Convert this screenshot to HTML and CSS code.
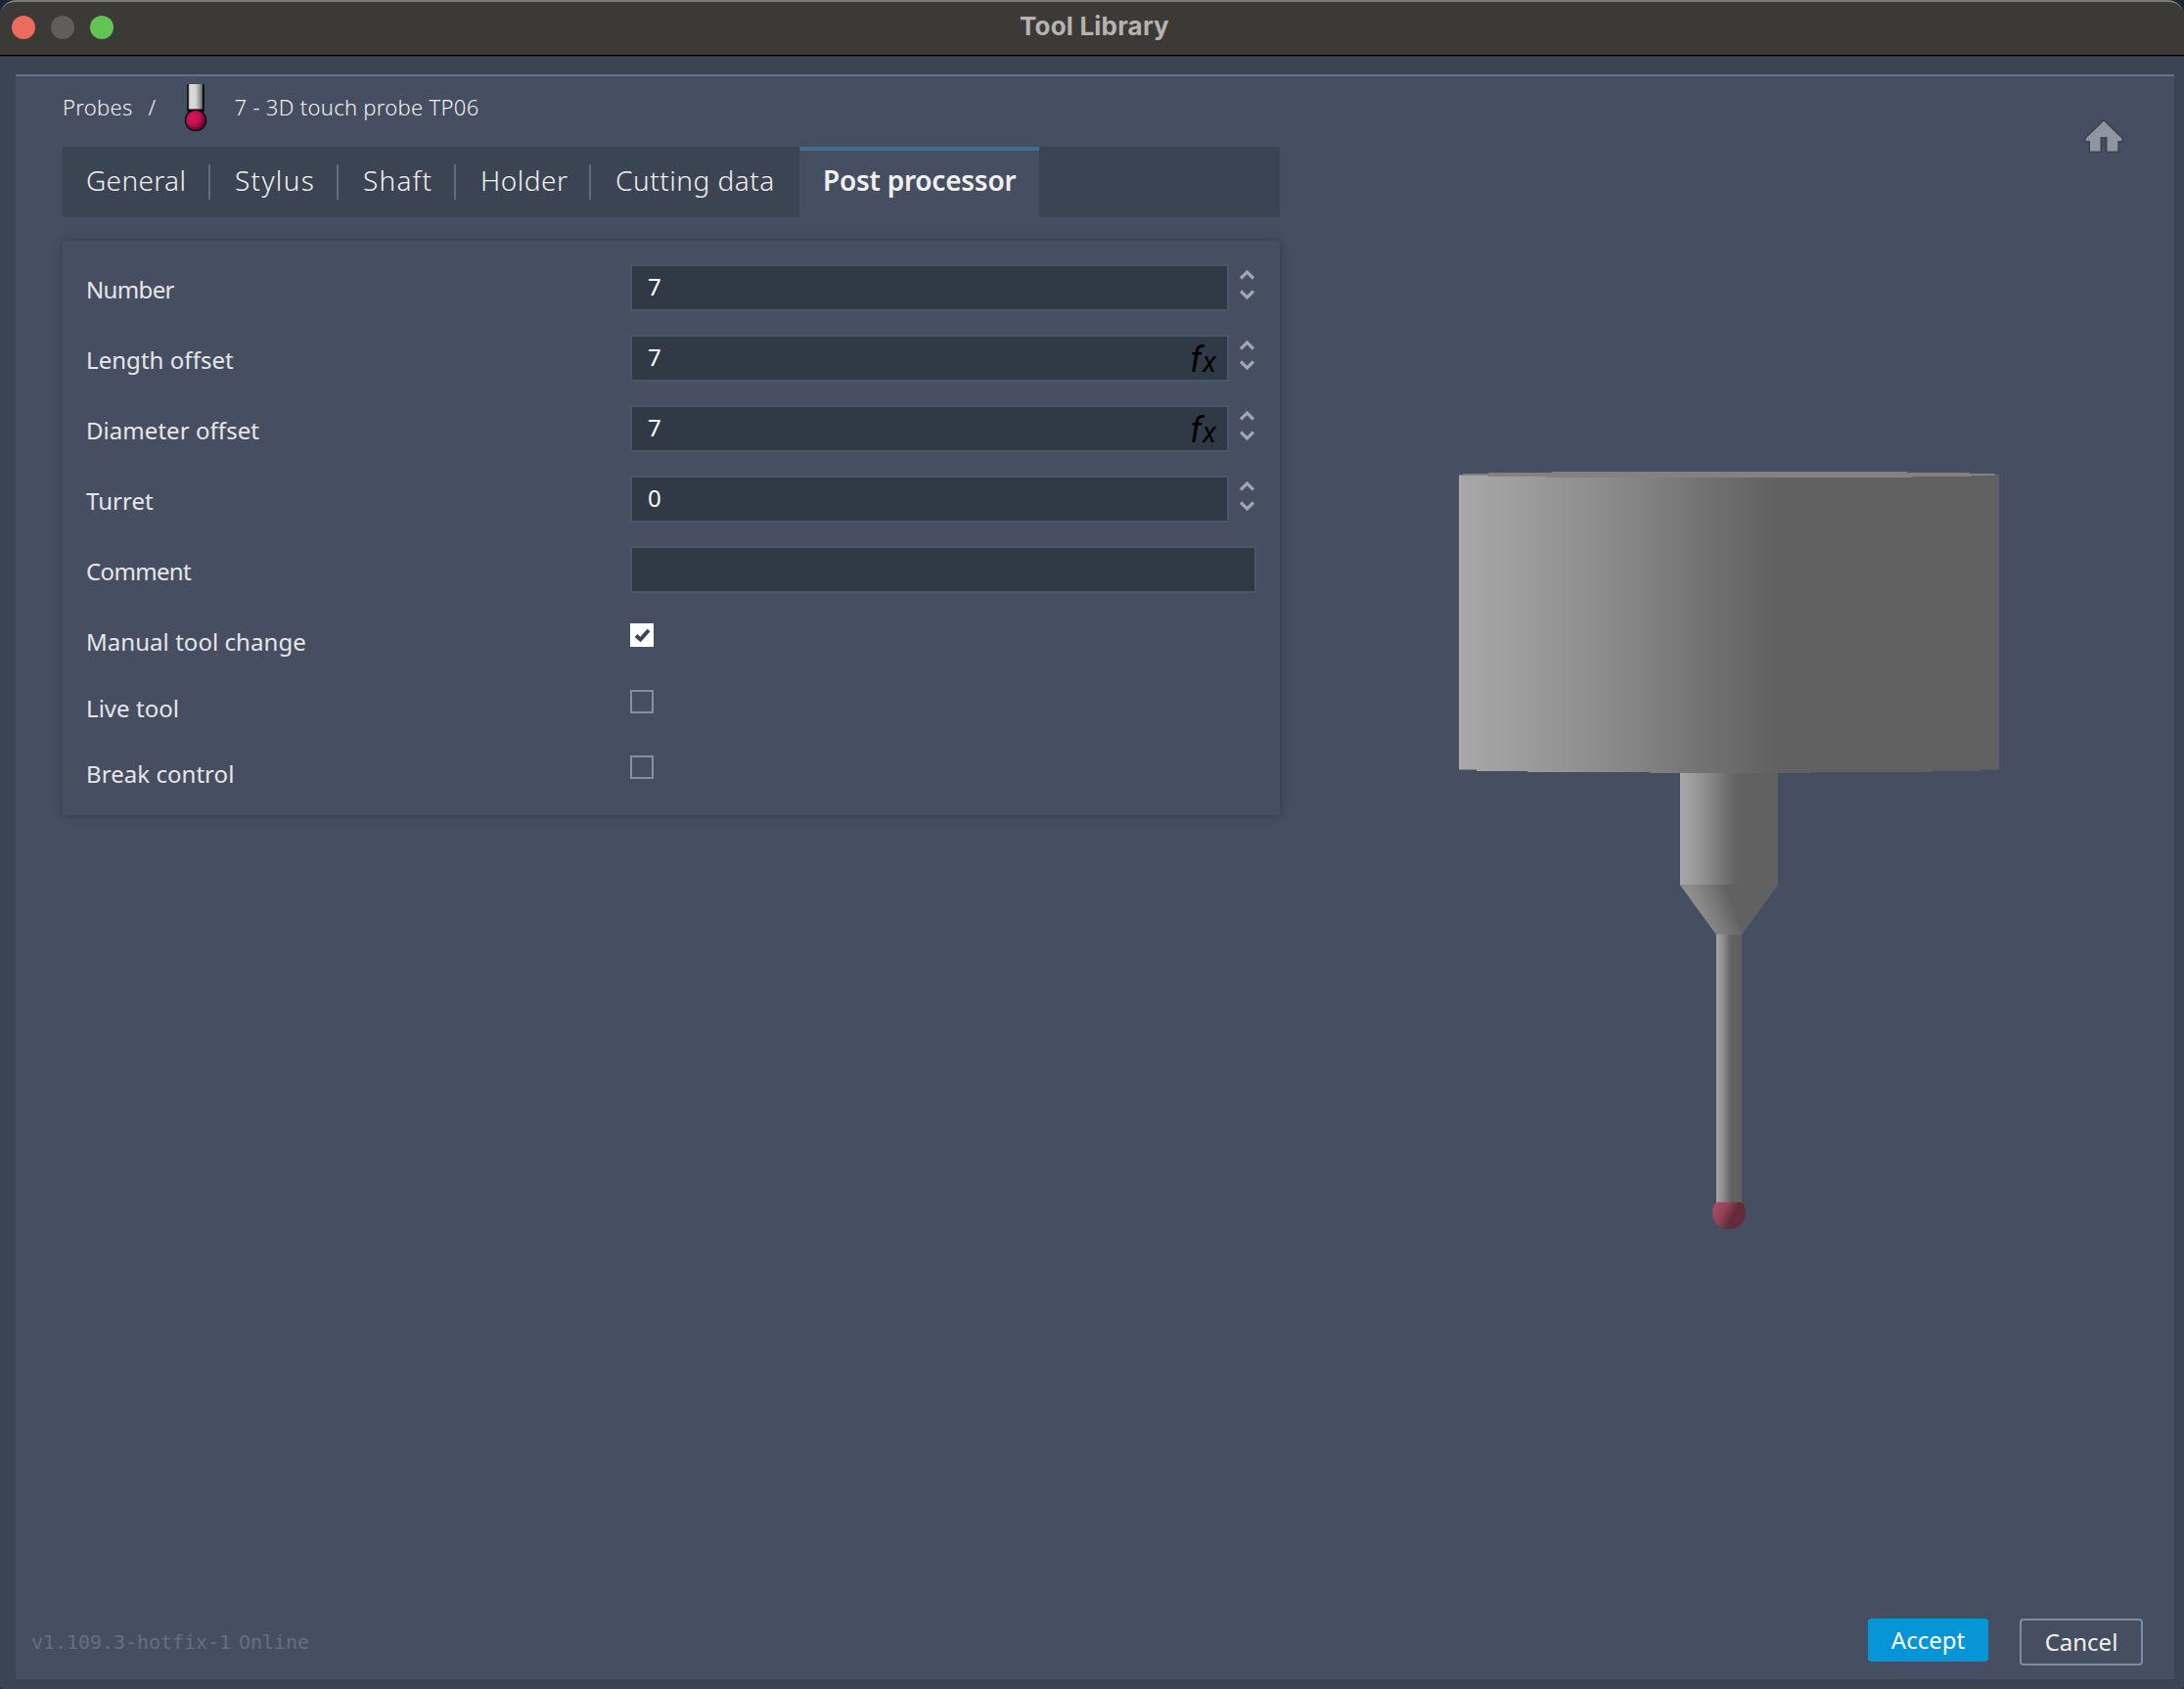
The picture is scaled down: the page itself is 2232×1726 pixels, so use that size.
FILE: index.html
```
<!DOCTYPE html>
<html lang="en">
<head>
<meta charset="utf-8">
<title>Tool Library</title>
<link rel="stylesheet" href="styles.css">
</head>
<body>
<div class="window">
  <header class="titlebar">
    <div class="lights"><span class="light close"></span><span class="light minimize"></span><span class="light zoom"></span></div>
    <h1 class="title">Tool Library</h1>
  </header>
  <main class="panel">
    <div class="content">
      <section class="editor">
        <nav class="breadcrumb">
          <span>Probes</span>
          <span class="slash">/</span>
          <svg class="probe-icon" width="24" height="50" viewBox="0 0 24 50">
            <defs>
              <linearGradient id="metal"><stop offset="0" stop-color="#b9b9b9"/><stop offset=".2" stop-color="#dedede"/><stop offset=".55" stop-color="#cfcfcf"/><stop offset="1" stop-color="#6c6c6c"/></linearGradient>
              <radialGradient id="ruby" cx=".35" cy=".35" r=".75"><stop offset="0" stop-color="#e0125f"/><stop offset=".5" stop-color="#bf0f50"/><stop offset="1" stop-color="#4c0620"/></radialGradient>
            </defs>
            <path d="M3.2 0H20.8V27L19 31H5L3.2 27Z" fill="#0c0c0e"/>
            <rect x="4.8" y="0" width="14" height="25.500" fill="url(#metal)"/>
            <path d="M6 27.500H18" stroke="#555" stroke-width="1"/>
            <circle cx="12" cy="37" r="11.300" fill="#0c0c0e"/>
            <circle cx="12" cy="37" r="9.900" fill="url(#ruby)"/>
          </svg>
          <span class="tool-name">7 - 3D touch probe TP06</span>
        </nav>
        <nav class="tabs">
          <a class="tab general">General</a>
          <a class="tab stylus">Stylus</a>
          <a class="tab shaft">Shaft</a>
          <a class="tab holder">Holder</a>
          <a class="tab cutting">Cutting data</a>
          <a class="tab active">Post processor</a>
        </nav>
        <form class="card">
          <div class="row"><label class="tight">Number</label><div class="input">7</div><svg class="spinner" width="17" height="32" viewBox="0 0 17 32"><path d="M2 9.500 8.500 3 15 9.500M2 22.500 8.500 29 15 22.500"/></svg></div>
          <div class="row"><label>Length offset</label><div class="input">7<span class="fx">f<small>x</small></span></div><svg class="spinner" width="17" height="32" viewBox="0 0 17 32"><path d="M2 9.500 8.500 3 15 9.500M2 22.500 8.500 29 15 22.500"/></svg></div>
          <div class="row"><label>Diameter offset</label><div class="input">7<span class="fx">f<small>x</small></span></div><svg class="spinner" width="17" height="32" viewBox="0 0 17 32"><path d="M2 9.500 8.500 3 15 9.500M2 22.500 8.500 29 15 22.500"/></svg></div>
          <div class="row"><label>Turret</label><div class="input">0</div><svg class="spinner" width="17" height="32" viewBox="0 0 17 32"><path d="M2 9.500 8.500 3 15 9.500M2 22.500 8.500 29 15 22.500"/></svg></div>
          <div class="row"><label class="tight">Comment</label><div class="input"></div></div>
          <div class="row check-row"><label>Manual tool change</label><span class="checkbox checked"><svg width="24" height="24" viewBox="0 0 24 24"><path d="M6 12.500 10.500 16.500 19 7"/></svg></span></div>
          <div class="row check-row"><label>Live tool</label><span class="checkbox"></span></div>
          <div class="row check-row"><label>Break control</label><span class="checkbox"></span></div>
        </form>
      </section>
      <section class="viewport">
        <svg class="home" width="44" height="38" viewBox="0 0 44 38">
          <path d="M22 3.700 40.300 21.500V24H36.300V34.500H25.500V20H18.500V34.500H8V24H3.700V21.500Z"/>
        </svg>
        <svg class="model" width="552" height="774" viewBox="0 0 552 774">
          <defs>
            <linearGradient id="steel"><stop offset="0" stop-color="#a8a8a8"/><stop offset=".1" stop-color="#9e9e9e"/><stop offset=".24" stop-color="#8f8f8f"/><stop offset=".38" stop-color="#7d7d7d"/><stop offset=".46" stop-color="#717171"/><stop offset=".54" stop-color="#676767"/><stop offset=".59" stop-color="#616161"/></linearGradient>
            <linearGradient id="cone" gradientUnits="userSpaceOnUse" x1="246" y1="455" x2="280" y2="442"><stop offset="0" stop-color="#8e8e8e"/><stop offset=".5" stop-color="#7b7b7b"/><stop offset="1" stop-color="#616161"/></linearGradient>
            <linearGradient id="tip" x1="0" y1=".3" x2="1" y2=".7"><stop offset="0" stop-color="#a94a64"/><stop offset=".3" stop-color="#94425a"/><stop offset=".6" stop-color="#632b3b"/></linearGradient>
          </defs>
          <path d="M0 3H552V304.500H533V306H484V307H360V308H195V307H70V306H18V304.500H0Z" fill="url(#steel)"/>
          <path d="M4 3V2H30V1H95V0H458V1H522V2H548V4H524V5H464V6H90V5H30V4H0V3Z" fill="#828282"/>
          <path d="M226 308H326V422L289 473H263L226 422Z" fill="url(#steel)"/>
          <path d="M226 422H326L289 473H263Z" fill="url(#cone)"/>
          <rect x="263" y="473" width="26" height="274" fill="url(#steel)"/>
          <path d="M263 746.500H289A17 17 0 1 1 263 746.500Z" fill="url(#tip)"/>
        </svg>
      </section>
    </div>
    <footer class="footer">
      <div class="version">v1.109.3-hotfix-1<span class="status">Online</span></div>
      <button class="accept">Accept</button>
      <button class="cancel">Cancel</button>
    </footer>
  </main>
</div>
</body>
</html>
```
FILE: styles.css
```
* { box-sizing: border-box; }

body {
  margin: 0;
  background: #1b2434;
  font-family: "Noto Sans", sans-serif;
  color: #f0f0f0;
}

.window {
  display: flex;
  flex-direction: column;
  height: 1726px;
  padding-bottom: 10px;
  background: #3b4453;
  border-radius: 16px 16px 3px 3px;
  overflow: hidden;
}

.titlebar {
  display: grid;
  grid-template-columns: 205px 1fr 200px;
  height: 58px;
  border-top: 2px solid #7b7b79;
  border-bottom: 1px solid #282e37;
  border-radius: 16px 16px 0 0;
  background: #3c3a37;
  box-shadow: inset 0 -1px #000;
}

.lights {
  display: flex;
  gap: 16px;
  padding: 14px 0 0 12px;
}

.light {
  width: 24px;
  height: 24px;
  border-radius: 50%;
}

.close { background: #ed6a5e; }
.minimize { background: #5f5e5c; }
.zoom { background: #61c454; }

.title {
  margin: 0;
  text-align: center;
  font: 700 26px/49px Inter, sans-serif;
  letter-spacing: .2px;
  color: #b5b3b0;
}

.panel {
  flex: 1;
  display: flex;
  flex-direction: column;
  margin: 18px 10px 0 16px;
  border-top: 2px solid #677387;
  background: #464f61;
}

.content {
  flex: 1;
  display: flex;
}

.editor {
  width: 1244px;
  margin-left: 48px;
}

.breadcrumb {
  display: flex;
  align-items: center;
  height: 61px;
  font-size: 22px;
  font-weight: 300;
  letter-spacing: .3px;
}

.slash { margin-left: 16px; }

.probe-icon {
  margin: 4px 28px 0 28px;
}

.tabs {
  display: grid;
  grid-template-columns: 151px 131px 120px 138px 213px 245px;
  height: 72px;
  margin-top: 11px;
  background: #3b4453;
  font-size: 28px;
  font-weight: 300;
  line-height: 68px;
}

.tab {
  padding-left: 24px;
  background: linear-gradient(#5f6d7e, #5f6d7e) right 18px / 2px 36px no-repeat;
  white-space: nowrap;
}

.general { letter-spacing: .35px; }
.stylus { padding-left: 25px; letter-spacing: 1.3px; }
.shaft { padding-left: 25px; letter-spacing: 1.2px; }
.holder { padding-left: 25px; letter-spacing: .5px; }
.cutting { padding-left: 25px; letter-spacing: .5px; background: none; }

.active {
  padding-left: 24px;
  border-top: 4px solid #416e8d;
  background: #464f61;
  font-weight: 600;
  line-height: 60px;
  letter-spacing: -.25px;
}

.card {
  height: 587px;
  margin: 24px 0 0;
  padding: 24px 24px 0;
  border-radius: 4px;
  box-shadow: 0 0 8px rgba(30, 38, 50, .5);
}

.row {
  display: flex;
  height: 72px;
  font-size: 24px;
}

.row label {
  width: 556px;
  line-height: 51px;
  letter-spacing: .05px;
  color: #e6e7e9;
}

.row .tight { letter-spacing: -.65px; }

.input {
  flex: 1;
  display: flex;
  justify-content: space-between;
  height: 48px;
  padding: 0 11px 0 16px;
  border: 2px solid #4a5767;
  background: #303a46;
  line-height: 42px;
  color: #fff;
}

.fx {
  font-family: Roboto, sans-serif;
  font-size: 36px;
  font-style: italic;
  line-height: 49px;
  color: #000;
}

.fx small {
  margin-left: 1px;
  font-size: 29px;
}

.spinner {
  margin: 5px 1px 0 10px;
}

.spinner path {
  fill: none;
  stroke: #a0a6b2;
  stroke-width: 3.2;
}

.check-row {
  height: 67.5px;
}

.checkbox {
  width: 24px;
  height: 24px;
  margin-top: 7px;
  border: 2px solid #8591a3;
}

.checked {
  border: 0;
  background: #fff;
}

.checked svg { display: block; }

.checked path {
  fill: none;
  stroke: #3b4453;
  stroke-width: 4;
}

.viewport {
  flex: 1;
  display: flex;
  flex-direction: column;
}

.home {
  align-self: flex-end;
  margin: 42px 50px 0 0;
}

.home path {
  fill: #8f96a1;
  stroke: #3a4352;
  stroke-width: 3.5;
  stroke-linejoin: round;
  paint-order: stroke;
}

.model {
  margin: 324px 0 0 183px;
}

.footer {
  display: flex;
  align-items: flex-start;
  height: 62px;
  padding: 0 32px 0 16px;
}

.version {
  flex: 1;
  padding-top: 12px;
  font: 20px/24px "DejaVu Sans Mono", monospace;
  letter-spacing: -.04px;
  color: #667080;
}

.status { margin-left: 8px; }

.footer button {
  padding: 0;
  border-radius: 4px;
  font: 24px "Noto Sans", sans-serif;
  color: #fff;
}

.footer .accept {
  width: 123px;
  height: 44px;
  padding-bottom: 2px;
  border: 0;
  background: #0696d7;
}

.footer .cancel {
  width: 126px;
  height: 48px;
  margin-left: 32px;
  padding-bottom: 2px;
  border: 2px solid #7d8ca6;
  background: none;
  color: #f0f0f0;
}
```
